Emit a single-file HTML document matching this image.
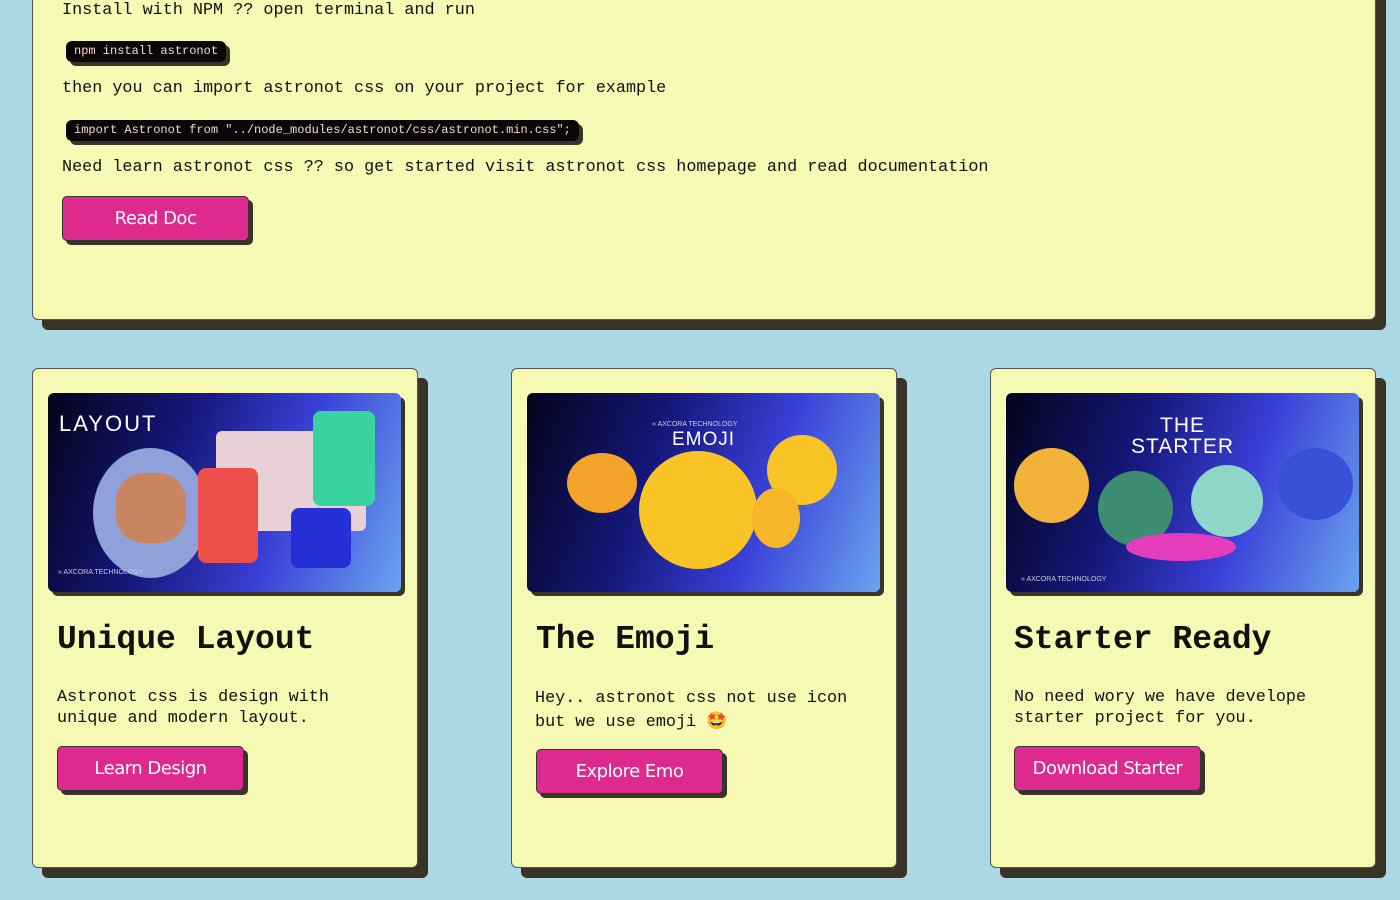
<!DOCTYPE html>
<html><head><style>
*{box-sizing:border-box;margin:0;padding:0}
body{width:1400px;height:900px;background:#acd8e6;position:relative;overflow:hidden;font-family:"Liberation Mono",monospace;color:#111}
.card{position:absolute;background:#f6f9b4;border:1px solid #555;border-radius:6px;box-shadow:10px 10px 0 #3a3328}
.p{position:absolute;font-size:16.8px;white-space:nowrap}
.code{position:absolute;background:#0b0708;color:#f4d7d7;font-size:12px;border-radius:6px;padding:0 8px;height:21px;line-height:21px;box-shadow:4px 4px 0 #3a3328;white-space:nowrap}
.btn{position:absolute;background:#de2a8e;color:#fff;font-family:"DejaVu Sans","Liberation Sans",sans-serif;font-size:18px;border:1px solid #333;border-radius:5px;box-shadow:4px 4px 0 #3a3328;text-align:center;letter-spacing:-0.5px}
.img{position:absolute;width:353px;height:199px;border-radius:6px;box-shadow:4px 4px 0 #3a3328;overflow:hidden;background:linear-gradient(110deg,#03041a 0%,#15177a 35%,#3a40d8 65%,#6aa3ef 100%);font-family:"Liberation Sans",sans-serif;color:#fff}
.h{position:absolute;font-size:33px;font-weight:bold;white-space:nowrap}
.ax{position:absolute;font-size:7px;color:#ccd}
</style></head><body>
<div class="card" style="left:32px;top:-20px;width:1344px;height:340px"></div>
<div class="p" style="left:62px;top:1px">Install with NPM ?? open terminal and run</div>
<div class="code" style="left:66px;top:41px">npm install astronot</div>
<div class="p" style="left:62px;top:79px">then you can import astronot css on your project for example</div>
<div class="code" style="left:66px;top:120px">import Astronot from "../node_modules/astronot/css/astronot.min.css";</div>
<div class="p" style="left:62px;top:158px">Need learn astronot css ?? so get started visit astronot css homepage and read documentation</div>
<div class="btn" style="left:62px;top:196px;width:187px;height:45px;line-height:44px">Read Doc</div>

<div class="card" style="left:32px;top:368px;width:386px;height:500px"></div>
<div class="img" style="left:48px;top:393px">
<div style="position:absolute;left:11px;top:18px;font-size:22px;letter-spacing:2px">LAYOUT</div>
<div style="position:absolute;left:45px;top:55px;width:115px;height:130px;border-radius:50%;background:#8fa1d8"></div>
<div style="position:absolute;left:68px;top:80px;width:70px;height:70px;border-radius:40%;background:#c98462"></div>
<div style="position:absolute;left:168px;top:38px;width:150px;height:100px;background:#e9cfd6;border-radius:6px"></div>
<div style="position:absolute;left:150px;top:75px;width:60px;height:95px;background:#ef4f4a;border-radius:8px"></div>
<div style="position:absolute;left:265px;top:18px;width:62px;height:95px;background:#39d3a0;border-radius:8px"></div>
<div style="position:absolute;left:243px;top:115px;width:60px;height:60px;background:#2530d6;border-radius:8px"></div>
<div class="ax" style="left:10px;top:176px">» AXCORA TECHNOLOGY</div>
</div>
<div class="h" style="left:57px;top:621px">Unique Layout</div>
<div class="p" style="left:57px;top:687px;line-height:21px">Astronot css is design with<br>unique and modern layout.</div>
<div class="btn" style="left:57px;top:746px;width:187px;height:45px;line-height:44px">Learn Design</div>

<div class="card" style="left:511px;top:368px;width:386px;height:500px"></div>
<div class="img" style="left:527px;top:393px">
<div style="position:absolute;left:0;width:100%;top:36px;text-align:center;font-size:19px;letter-spacing:1px">EMOJI</div>
<div class="ax" style="left:125px;top:28px">» AXCORA TECHNOLOGY</div>
<div style="position:absolute;left:112px;top:58px;width:118px;height:118px;border-radius:50%;background:#f8c426"></div>
<div style="position:absolute;left:40px;top:60px;width:70px;height:60px;border-radius:50%;background:#f3a22a"></div>
<div style="position:absolute;left:240px;top:42px;width:70px;height:70px;border-radius:50%;background:#f8c426"></div>
<div style="position:absolute;left:225px;top:95px;width:48px;height:60px;border-radius:50%;background:#f6b62a"></div>
</div>
<div class="h" style="left:536px;top:621px">The Emoji</div>
<div class="p" style="left:535px;top:687px;line-height:24px">Hey.. astronot css not use icon<br>but we use emoji 🤩</div>
<div class="btn" style="left:536px;top:749px;width:187px;height:45px;line-height:44px">Explore Emo</div>

<div class="card" style="left:990px;top:368px;width:386px;height:500px"></div>
<div class="img" style="left:1006px;top:393px">
<div style="position:absolute;left:0;width:100%;top:22px;text-align:center;font-size:21px;line-height:21px;letter-spacing:1px">THE<br>STARTER</div>
<div style="position:absolute;left:8px;top:55px;width:75px;height:75px;border-radius:50%;background:#f1b33a"></div>
<div style="position:absolute;left:92px;top:78px;width:75px;height:75px;border-radius:50%;background:#3d8d73"></div>
<div style="position:absolute;left:185px;top:72px;width:72px;height:72px;border-radius:50%;background:#8ed6c7"></div>
<div style="position:absolute;left:272px;top:55px;width:75px;height:72px;border-radius:50%;background:#3851d8"></div>
<div style="position:absolute;left:120px;top:140px;width:110px;height:28px;border-radius:50%;background:#e33dbd"></div>
<div class="ax" style="left:15px;top:183px">» AXCORA TECHNOLOGY</div>
</div>
<div class="h" style="left:1014px;top:621px">Starter Ready</div>
<div class="p" style="left:1014px;top:687px;line-height:21px">No need wory we have develope<br>starter project for you.</div>
<div class="btn" style="left:1014px;top:746px;width:187px;height:45px;line-height:44px">Download Starter</div>
</body></html>
